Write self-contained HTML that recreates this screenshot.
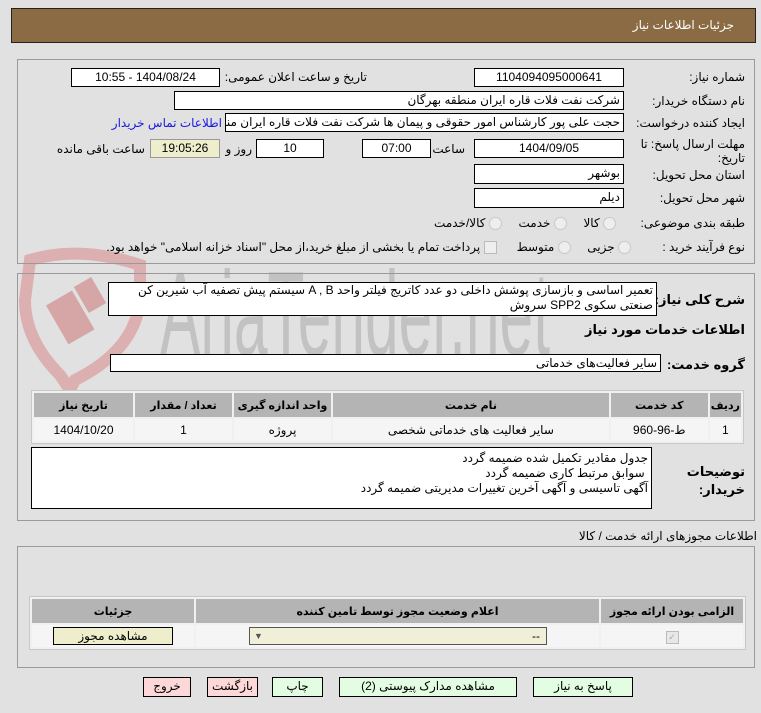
<!DOCTYPE html>
<html><head><meta charset="utf-8">
<style>
body{margin:0;width:761px;height:713px;background:#e1e1e1;font-family:"Liberation Sans","DejaVu Sans",sans-serif;font-size:12px;color:#000;position:relative;overflow:hidden}
.a{position:absolute}
.inp{position:absolute;background:#fff;border:1px solid #000;box-sizing:border-box;direction:rtl;white-space:nowrap;overflow:hidden;line-height:16px;padding:0 3px}
.c{text-align:center}
.pan{position:absolute;border:1px solid #9a9a9a;box-sizing:border-box}
.lbl{position:absolute;direction:rtl;white-space:nowrap;text-align:right}
table{border-collapse:separate;border-spacing:2px;position:absolute;background:#f0f0f0;border:1px solid #c8c8c8}
th{background:#b4b4b4;font-weight:bold;font-size:11px;height:22px}
td{background:#f5f5f5;text-align:center;height:20px}
.btn{position:absolute;border:1px solid #000;box-sizing:border-box;text-align:center;line-height:17px;direction:rtl}
.rad{display:inline-block;width:11px;height:11px;border-radius:50%;border:1px solid #c8c8c8;background:#eee;vertical-align:middle}
</style></head><body>
<svg class="a" style="left:0;top:240px" width="600" height="170">
<path d="M30 20 Q80 5 140 25 L140 60 Q135 110 75 140 L70 150 L60 135 Q25 100 25 60 Z" fill="none" stroke="#dcb0b0" stroke-width="12"/>
<rect x="55" y="55" width="30" height="45" fill="#d6a6a6" transform="rotate(-30 70 77)"/>
<rect x="80" y="40" width="20" height="30" fill="#d6a6a6" transform="rotate(-30 90 55)"/>
<text x="160" y="115" font-family="Liberation Sans Narrow,Liberation Sans,sans-serif" font-size="120" fill="#c2c2c2" textLength="390" lengthAdjust="spacingAndGlyphs">AriaTender.net</text>
</svg>
<div class="a" style="left:11px;top:8px;width:745px;height:35px;background:#8a6b43;border:1px solid #222;box-sizing:border-box"></div>
<div class="lbl" style="right:27px;top:18px;color:#fff;font-size:12px">جزئیات اطلاعات نیاز</div>

<div class="pan" style="left:17px;top:59px;width:738px;height:205px"></div>
<div class="lbl" style="right:16px;top:70px">شماره نیاز:</div>
<div class="inp c" style="left:474px;top:68px;width:150px;height:19px">1104094095000641</div>
<div class="lbl" style="right:394px;top:70px">تاریخ و ساعت اعلان عمومی:</div>
<div class="inp c" style="left:71px;top:68px;width:149px;height:19px">1404/08/24 - 10:55</div>
<div class="lbl" style="right:16px;top:94px">نام دستگاه خریدار:</div>
<div class="inp" style="left:174px;top:91px;width:450px;height:19px">شرکت نفت فلات قاره ایران منطقه بهرگان</div>
<div class="lbl" style="right:16px;top:116px">ایجاد کننده درخواست:</div>
<div class="inp" style="left:225px;top:113px;width:399px;height:19px">حجت علی پور کارشناس امور حقوقی و پیمان ها شرکت نفت فلات قاره ایران منطقه بهرگان</div>
<div class="lbl" style="right:539px;top:116px;color:#1a1adc">اطلاعات تماس خریدار</div>
<div class="lbl" style="right:16px;top:137px;line-height:14px">مهلت ارسال پاسخ: تا<br>تاریخ:</div>
<div class="inp c" style="left:474px;top:139px;width:150px;height:19px">1404/09/05</div>
<div class="lbl" style="right:296px;top:142px">ساعت</div>
<div class="inp c" style="left:362px;top:139px;width:69px;height:19px">07:00</div>
<div class="inp c" style="left:256px;top:139px;width:68px;height:19px">10</div>
<div class="lbl" style="right:509px;top:142px">روز و</div>
<div class="inp c" style="left:150px;top:139px;width:70px;height:19px;background:#eeeecc;border-color:#999">19:05:26</div>
<div class="lbl" style="right:616px;top:142px">ساعت باقی مانده</div>
<div class="lbl" style="right:16px;top:168px">استان محل تحویل:</div>
<div class="inp" style="left:474px;top:164px;width:150px;height:20px">بوشهر</div>
<div class="lbl" style="right:16px;top:191px">شهر محل تحویل:</div>
<div class="inp" style="left:474px;top:188px;width:150px;height:20px">دیلم</div>
<div class="lbl" style="right:16px;top:216px">طبقه بندی موضوعی:</div>
<div class="lbl" style="right:145px;top:216px"><span class="rad"></span> کالا &nbsp;&nbsp;&nbsp; <span class="rad"></span> خدمت &nbsp;&nbsp;&nbsp; <span class="rad"></span> کالا/خدمت</div>
<div class="lbl" style="right:16px;top:240px">نوع فرآیند خرید :</div>
<div class="lbl" style="right:130px;top:240px"><span class="rad"></span> جزیی &nbsp;&nbsp;&nbsp; <span class="rad"></span> متوسط &nbsp;&nbsp;&nbsp;&nbsp; <span style="display:inline-block;width:11px;height:11px;border:1px solid #bbb;background:#eee;vertical-align:middle"></span> پرداخت تمام یا بخشی از مبلغ خرید،از محل "اسناد خزانه اسلامی" خواهد بود.</div>

<div class="pan" style="left:17px;top:273px;width:738px;height:248px"></div>
<div class="lbl" style="right:16px;top:292px;font-weight:bold;font-size:13px">شرح کلی نیاز:</div>
<div class="inp" style="left:108px;top:282px;width:549px;height:34px;white-space:normal;line-height:15px;background:#fff">تعمیر اساسی و بازسازی پوشش داخلی دو عدد کاتریج فیلتر واحد A , B سیستم پیش تصفیه آب شیرین کن صنعتی سکوی SPP2 سروش</div>
<div class="lbl" style="right:16px;top:322px;font-weight:bold;font-size:13px">اطلاعات خدمات مورد نیاز</div>
<div class="lbl" style="right:16px;top:357px;font-weight:bold;font-size:13px">گروه خدمت:</div>
<div class="inp" style="left:110px;top:354px;width:551px;height:18px">سایر فعالیت‌های خدماتی</div>
<table style="left:31px;top:390px;width:713px;direction:rtl">
<tr><th style="width:25px">ردیف</th><th style="width:95px">کد خدمت</th><th>نام خدمت</th><th style="width:95px">واحد اندازه گیری</th><th style="width:95px">تعداد / مقدار</th><th style="width:97px">تاریخ نیاز</th></tr>
<tr><td>1</td><td>ط-96-960</td><td>سایر فعالیت های خدماتی شخصی</td><td>پروژه</td><td>1</td><td>1404/10/20</td></tr>
</table>
<div class="lbl" style="right:16px;top:463px;font-weight:bold;font-size:13px;line-height:18px">توضیحات<br>خریدار:</div>
<div class="inp" style="left:31px;top:447px;width:621px;height:62px;white-space:normal;line-height:15px;padding-top:3px">جدول مقادیر تکمیل شده ضمیمه گردد<br>&nbsp;سوابق مرتبط کاری ضمیمه گردد<br>آگهی تاسیسی و آگهی آخرین تغییرات مدیریتی ضمیمه گردد</div>

<div class="lbl" style="right:4px;top:529px">اطلاعات مجوزهای ارائه خدمت / کالا</div>
<div class="pan" style="left:17px;top:546px;width:738px;height:122px"></div>
<table style="left:29px;top:596px;width:717px;direction:rtl">
<tr><th style="width:140px">الزامی بودن ارائه مجوز</th><th>اعلام وضعیت مجوز توسط تامین کننده</th><th style="width:160px">جزئیات</th></tr>
<tr><td><span style="display:inline-block;width:11px;height:11px;border:1px solid #bbb;background:#e8e8e8;color:#aaa;font-size:9px;line-height:11px">✓</span></td><td><div style="margin:0 auto 0 52px;width:298px;height:18px;background:#f0f0d8;border:1px solid #555;box-sizing:border-box;text-align:right;padding-right:6px;line-height:16px;position:relative">--<span style="position:absolute;left:4px;font-size:9px;color:#555">▼</span></div></td><td><div style="margin:0 auto;width:120px;height:18px;background:#eeeecc;border:1px solid #000;box-sizing:border-box;line-height:16px">مشاهده مجوز</div></td></tr>
</table>

<div class="btn" style="left:533px;top:677px;width:100px;height:20px;background:#e2fde2">پاسخ به نیاز</div>
<div class="btn" style="left:339px;top:677px;width:178px;height:20px;background:#e2fde2">مشاهده مدارک پیوستی (2)</div>
<div class="btn" style="left:272px;top:677px;width:51px;height:20px;background:#e2fde2">چاپ</div>
<div class="btn" style="left:207px;top:677px;width:51px;height:20px;background:#fdd8d8">بازگشت</div>
<div class="btn" style="left:143px;top:677px;width:48px;height:20px;background:#fdd8d8">خروج</div>
</body></html>
